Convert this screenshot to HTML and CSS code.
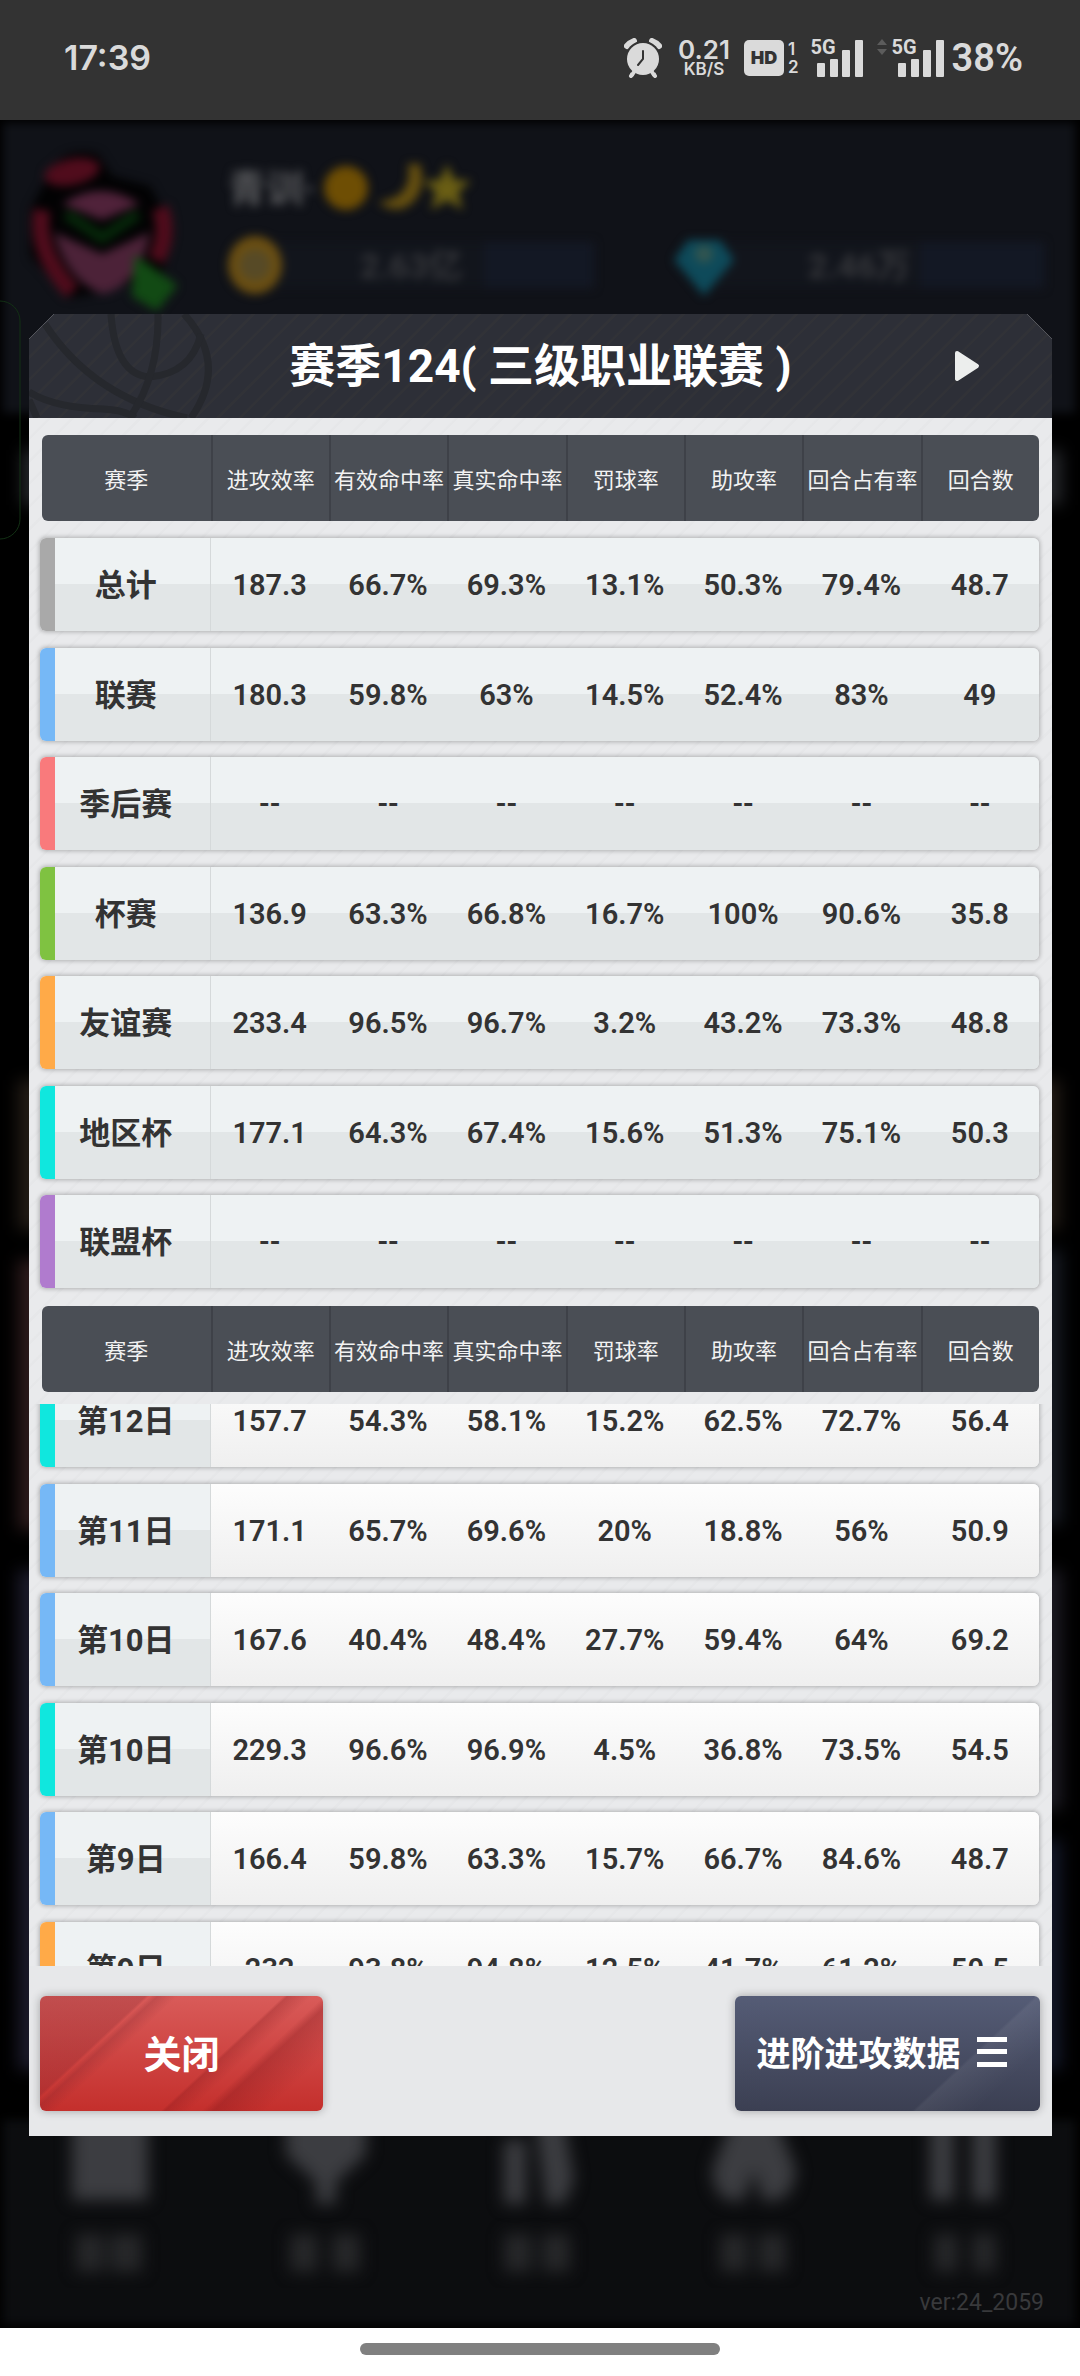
FILE: index.html
```html
<!DOCTYPE html>
<html lang="zh-CN">
  <head>
    <meta charset="UTF-8" />
    <meta name="viewport" content="width=device-width, initial-scale=1.0" />
    <title>赛季数据</title>
    <link rel="stylesheet" href="styles.css">
  </head>
  <body>
    <header class="status-bar">
      <span class="clock">17:39</span>
      <div class="status-icons">
        <svg class="alarm" width="38" height="40" viewBox="0 0 38 40">
          <path d="M3 8 A16 16 0 0 1 10 3" stroke="#dadada" stroke-width="6" fill="none" stroke-linecap="round" />
          <path d="M28 3 A16 16 0 0 1 35 8" stroke="#dadada" stroke-width="6" fill="none" stroke-linecap="round" />
          <path d="M10 33 L7 38 M28 33 L31 38" stroke="#dadada" stroke-width="4" stroke-linecap="round" />
          <circle cx="19" cy="21" r="18" fill="#333" />
          <circle cx="19" cy="21" r="16" fill="#dadada" />
          <path d="M10 34 L8 37 M28 34 L30 37" stroke="#dadada" stroke-width="4" stroke-linecap="round" />
          <path d="M19 13 V21 L14 27" stroke="#333" stroke-width="2" fill="none" stroke-linecap="round" />
        </svg>
        <div class="net-speed"><span>0.21</span><small>KB/S</small></div>
        <div class="hd"><b>HD</b><span class="sims"><i>1</i><i>2</i></span></div>
        <div class="signal">
          <svg width="46" height="37" viewBox="0 0 46 37" fill="#dadada">
            <rect x="0" y="23" width="8" height="14" rx="1" />
            <rect x="13" y="19" width="8" height="18" rx="1" />
            <rect x="25" y="10" width="8" height="27" rx="1" />
            <rect x="38" y="0" width="8" height="37" rx="1" />
          </svg>
          <span class="net-type">5G</span>
        </div>
        <svg class="arrows" width="10" height="16" viewBox="0 0 10 16" fill="#5c5c5c">
          <path d="M5 0 L10 6 H0 Z M5 16 L10 10 H0 Z" />
        </svg>
        <div class="signal">
          <svg width="46" height="37" viewBox="0 0 46 37" fill="#dadada">
            <rect x="0" y="23" width="8" height="14" rx="1" />
            <rect x="13" y="19" width="8" height="18" rx="1" />
            <rect x="25" y="10" width="8" height="27" rx="1" />
            <rect x="38" y="0" width="8" height="37" rx="1" />
          </svg>
          <span class="net-type">5G</span>
        </div>
        <span class="battery">38%</span>
      </div>
    </header>

    <main class="game">
      <!-- dimmed home screen behind the dialog -->
      <svg class="backdrop" viewBox="0 0 1080 2208" preserveAspectRatio="none" aria-hidden="true">
        <defs>
          <filter id="soft" x="-20%" y="-20%" width="140%" height="140%" color-interpolation-filters="sRGB"><feGaussianBlur stdDeviation="5" /></filter>
          <filter id="softer" x="-20%" y="-40%" width="140%" height="180%" color-interpolation-filters="sRGB"><feGaussianBlur stdDeviation="8" /></filter>
        </defs>
        <rect width="1080" height="2208" fill="#000" />
        <g filter="url(#soft)">
          <rect x="3" y="3" width="1072" height="290" fill="#101218" />
          <rect x="3" y="2000" width="1072" height="204" fill="#0c0d0f" />
        </g>
        <g filter="url(#softer)">
          <rect x="22" y="330" width="1040" height="55" fill="#24262a" />
          <rect x="18" y="960" width="1042" height="150" fill="#221b15" />
          <rect x="18" y="1140" width="500" height="270" fill="#2c1a1b" />
          <rect x="560" y="1130" width="502" height="275" fill="#161a22" />
          <rect x="18" y="1450" width="500" height="500" fill="#1b1a2a" />
          <rect x="560" y="1450" width="502" height="240" fill="#1c1a22" />
          <rect x="560" y="1720" width="502" height="230" fill="#121626" />
        </g>
        <g filter="url(#soft)">
          <path d="M46 60 Q60 24 98 34 L112 56 L150 66 L174 112 L164 150 L104 172 L70 178 L30 136 L30 90 Z" fill="#020203" />
          <ellipse cx="72" cy="52" rx="28" ry="13" transform="rotate(-12 72 52)" fill="#500c1c" />
          <path d="M62 84 Q100 58 140 84 L102 100 Z" fill="#50223a" />
          <path d="M54 112 L102 134 L150 112 Q140 166 102 174 Q66 160 54 112 Z" fill="#4c2238" />
          <path d="M66 94 L102 118 L138 94" stroke="#06280a" stroke-width="11" fill="none" />
          <path d="M42 90 Q34 130 72 172" stroke="#500c1c" stroke-width="17" fill="none" />
          <path d="M160 88 Q170 114 156 140" stroke="#500c1c" stroke-width="17" fill="none" />
          <path d="M138 142 L172 166 L156 186 L136 174 Z" fill="#124a14" stroke="#124a14" stroke-width="8" />
          <rect x="250" y="122" width="344" height="46" fill="#12151c" />
          <rect x="484" y="122" width="110" height="46" fill="#131824" />
          <rect x="700" y="122" width="344" height="46" fill="#12151c" />
          <rect x="920" y="122" width="124" height="46" fill="#131824" />
          <ellipse cx="255" cy="145" rx="27" ry="29" fill="#6b4f12" />
          <circle cx="255" cy="145" r="16" fill="#574a26" />
          <path d="M688 120 L720 120 L734 140 L704 176 L674 140 Z" fill="#0e4a5a" />
          <circle cx="704" cy="134" r="9" fill="#33554f" />
          <circle cx="346" cy="68" r="22" fill="#6e4e04" />
          <path d="M408 44 Q414 78 378 82 Q390 92 404 88 Q428 76 420 44 Z" fill="#665010" />
          <path d="M447 44 L454 60 L471 61 L458 72 L463 90 L447 80 L431 90 L436 72 L423 61 L440 60 Z" fill="#6a5e14" />
          <text x="228" y="82" font-size="38" font-weight="700" fill="#56575a">青训·</text>
          <text x="360" y="158" font-size="34" font-weight="700" fill="#36373b">2.63亿</text>
          <text x="808" y="158" font-size="34" font-weight="700" fill="#36373b">2.46万</text>
        </g>
        <g filter="url(#softer)" fill="#3c3d41">
          <rect x="72" y="1990" width="76" height="90" />
          <path d="M286 1990 H366 V2035 L336 2062 V2084 H316 V2062 L286 2035 Z" />
          <path d="M504 2020 H526 V2084 H504 Z M534 1990 H562 L574 2060 L564 2084 H546 Z" />
          <path d="M736 1990 H772 L796 2050 Q792 2086 762 2080 L754 2050 L744 2080 Q714 2086 712 2050 Z" />
          <rect x="930" y="1990" width="24" height="90" />
          <rect x="972" y="1990" width="24" height="90" />
        </g>
        <g filter="url(#softer)" fill="#262729">
          <path d="M76 2114 h28 v38 h-28 z m34 0 h32 v38 h-32 z" />
          <path d="M290 2114 h28 v38 h-28 z m42 0 h28 v38 h-28 z" />
          <path d="M504 2114 h28 v38 h-28 z m38 0 h28 v38 h-28 z" />
          <path d="M720 2114 h28 v38 h-28 z m38 0 h28 v38 h-28 z" />
          <path d="M934 2114 h24 v38 h-24 z m38 0 h24 v38 h-24 z" />
        </g>
        <path d="M0 181 A20 20 0 0 1 20 201 V399 A20 20 0 0 1 0 419" fill="none" stroke="#123014" stroke-width="1" />
      </svg>

      <section class="dialog">
        <div class="dialog-head">
          <svg class="ball" viewBox="0 0 184 104" preserveAspectRatio="xMinYMin slice" fill="none" stroke="#26282d" stroke-width="7" aria-hidden="true">
            <path d="M155 0 Q200 50 162 104" />
            <path d="M16 10 Q64 84 158 104" />
            <path d="M82 0 Q86 60 120 63 Q162 60 172 20" />
            <path d="M129 0 Q130 60 102 102" />
            <path d="M0 78 Q26 94 74 95 Q96 96 106 104" />
            <path d="M0 86 L8 104" />
          </svg>
          <h1>赛季124( 三级职业联赛 )</h1>
          <button type="button" class="next" aria-label="下一赛季">
            <svg width="26" height="32" viewBox="0 0 26 32"><path d="M3 3 L23 16 L3 29 Z" fill="#eceeed" stroke="#eceeed" stroke-width="4" stroke-linejoin="round" /></svg>
          </button>
        </div>

        <div class="dialog-body">
          <table class="stats summary">
            <thead>
              <tr><th>赛季</th><th>进攻效率</th><th>有效命中率</th><th>真实命中率</th><th>罚球率</th><th>助攻率</th><th>回合占有率</th><th>回合数</th></tr>
            </thead>
            <tbody>
              <tr class="total"><th>总计</th><td>187.3</td><td>66.7%</td><td>69.3%</td><td>13.1%</td><td>50.3%</td><td>79.4%</td><td>48.7</td></tr>
              <tr class="league"><th>联赛</th><td>180.3</td><td>59.8%</td><td>63%</td><td>14.5%</td><td>52.4%</td><td>83%</td><td>49</td></tr>
              <tr class="playoff"><th>季后赛</th><td>--</td><td>--</td><td>--</td><td>--</td><td>--</td><td>--</td><td>--</td></tr>
              <tr class="cup"><th>杯赛</th><td>136.9</td><td>63.3%</td><td>66.8%</td><td>16.7%</td><td>100%</td><td>90.6%</td><td>35.8</td></tr>
              <tr class="friendly"><th>友谊赛</th><td>233.4</td><td>96.5%</td><td>96.7%</td><td>3.2%</td><td>43.2%</td><td>73.3%</td><td>48.8</td></tr>
              <tr class="region"><th>地区杯</th><td>177.1</td><td>64.3%</td><td>67.4%</td><td>15.6%</td><td>51.3%</td><td>75.1%</td><td>50.3</td></tr>
              <tr class="alliance"><th>联盟杯</th><td>--</td><td>--</td><td>--</td><td>--</td><td>--</td><td>--</td><td>--</td></tr>
            </tbody>
          </table>

          <table class="stats daily">
            <thead>
              <tr><th>赛季</th><th>进攻效率</th><th>有效命中率</th><th>真实命中率</th><th>罚球率</th><th>助攻率</th><th>回合占有率</th><th>回合数</th></tr>
            </thead>
            <tbody>
              <tr class="region"><th>第12日</th><td>157.7</td><td>54.3%</td><td>58.1%</td><td>15.2%</td><td>62.5%</td><td>72.7%</td><td>56.4</td></tr>
              <tr class="league"><th>第11日</th><td>171.1</td><td>65.7%</td><td>69.6%</td><td>20%</td><td>18.8%</td><td>56%</td><td>50.9</td></tr>
              <tr class="league"><th>第10日</th><td>167.6</td><td>40.4%</td><td>48.4%</td><td>27.7%</td><td>59.4%</td><td>64%</td><td>69.2</td></tr>
              <tr class="region"><th>第10日</th><td>229.3</td><td>96.6%</td><td>96.9%</td><td>4.5%</td><td>36.8%</td><td>73.5%</td><td>54.5</td></tr>
              <tr class="league"><th>第9日</th><td>166.4</td><td>59.8%</td><td>63.3%</td><td>15.7%</td><td>66.7%</td><td>84.6%</td><td>48.7</td></tr>
              <tr class="friendly"><th>第9日</th><td>232</td><td>93.8%</td><td>94.8%</td><td>12.5%</td><td>41.7%</td><td>61.2%</td><td>50.5</td></tr>
            </tbody>
          </table>
        </div>

        <div class="dialog-foot">
          <button type="button" class="btn close">关闭</button>
          <button type="button" class="btn advanced">
            进阶进攻数据
            <svg width="30" height="30" viewBox="0 0 30 30" fill="#fff"><path d="M0 0h30v5H0z M0 12h30v5H0z M0 25h30v5H0z" /></svg>
          </button>
        </div>
      </section>

      <p class="version">ver:24_2059</p>
    </main>

    <footer class="nav-bar"><span class="handle"></span></footer>
  </body>
</html>
```
FILE: styles.css
```css
* {
  box-sizing: border-box;
}
body {
  margin: 0;
  min-height: 100vh;
  display: flex;
  flex-direction: column;
  font-family: Roboto, "Noto Sans CJK SC", sans-serif;
  background: #fff;
  color: #333;
}
h1,
p {
  margin: 0;
}
button {
  border: none;
  padding: 0;
  background: none;
  font-family: inherit;
  cursor: pointer;
}

/* status bar */
.status-bar {
  height: 120px;
  padding: 0 57px 4px 64px;
  display: flex;
  align-items: center;
  justify-content: space-between;
  background: #333;
  color: #dadada;
  font-family: Inter, sans-serif;
  font-weight: 600;
}
.clock {
  font-size: 34px;
  line-height: 40px;
}
.status-icons {
  display: flex;
  align-items: center;
}
.net-speed {
  display: flex;
  flex-direction: column;
  align-items: center;
  margin: 0 14px 0 16px;
  font-size: 26px;
  line-height: 22px;
}
.net-speed small {
  font-size: 17px;
  line-height: 16px;
}
.hd {
  display: flex;
  align-items: center;
  gap: 4px;
  margin-right: 12px;
}
.hd b {
  width: 40px;
  line-height: 36px;
  border-radius: 5px;
  background: #dadada;
  color: #333;
  font-size: 18px;
  text-align: center;
}
.sims {
  display: flex;
  flex-direction: column;
  font-size: 17px;
  line-height: 18px;
}
.sims i {
  font-style: normal;
}
.signal {
  position: relative;
  display: flex;
  padding-left: 6px;
}
.net-type {
  position: absolute;
  top: 0;
  left: 0;
  font-family: Roboto, sans-serif;
  font-size: 20px;
  font-weight: 700;
  line-height: 15px;
}
.arrows {
  margin: 0 5px 22px 14px;
}
.battery {
  margin-left: 8px;
  font-family: Roboto, sans-serif;
  font-size: 38px;
  line-height: 40px;
}

/* game area */
.game {
  position: relative;
  flex: 1;
  padding: 194px 28px 0 29px;
  background: #000;
}
.backdrop {
  position: absolute;
  inset: 0;
  width: 100%;
  height: 100%;
}
.dialog {
  position: relative;
  background: #e7e8ea;
  clip-path: polygon(25px 0, calc(100% - 25px) 0, 100% 25px, 100% 100%, 0 100%, 0 25px);
}
.dialog-head {
  position: relative;
  height: 104px;
  display: flex;
  align-items: center;
  justify-content: center;
  background: repeating-linear-gradient(135deg, #2d2f37 0 13px, #313237 14px 16px);
}
.ball {
  position: absolute;
  left: 0;
  top: 0;
  width: 184px;
  height: 100%;
}
.dialog-head h1 {
  position: relative;
  color: #fff;
  font-size: 46px;
  line-height: 60px;
}
.next {
  position: absolute;
  right: 72px;
  display: flex;
}
.dialog-body {
  padding: 17px 13px 0;
  background: repeating-linear-gradient(135deg, #e9eaec 0 13px, #e6e7e9 14px 16px);
}

/* stats tables */
.stats,
.stats thead,
.stats tbody {
  display: block;
}
.stats tr {
  display: grid;
  grid-template-columns: 168fr repeat(7, 118fr);
}
.stats th,
.stats td {
  display: flex;
  align-items: center;
  justify-content: center;
  padding: 0;
  white-space: nowrap;
}
.stats thead tr {
  height: 86px;
  border-radius: 6px;
  background: #4a4e55;
}
.stats thead th {
  color: #f2f2f2;
  font-size: 22px;
  font-weight: 400;
}
.stats thead th + th {
  border-left: 2px solid #3e4148;
}
.stats tbody {
  margin-left: -2px;
}
.stats tbody tr {
  grid-template-columns: 170fr repeat(7, 118fr);
  height: 93px;
  margin-bottom: 17px;
  border-radius: 6px;
  overflow: hidden;
  background: linear-gradient(#eef2f3 50%, #e2e6e7 50%);
  box-shadow: 0 0 4px 1px rgba(0, 0, 0, 0.25);
}
.stats tbody tr:nth-child(even) {
  margin-bottom: 16px;
}
.stats tbody th {
  padding: 0 0 4px 2px;
  background: linear-gradient(to right, var(--tag) 15px, transparent 15px);
  border-right: 1px solid #d5d9da;
  font-size: 31px;
  font-weight: 700;
}
.stats tbody td {
  font-size: 29px;
  font-weight: 600;
}
.summary tbody {
  padding: 17px 0 1px;
}

/* scrolling list, padded sideways so the row shadows are not clipped */
.daily tbody {
  height: 562px;
  margin: 12px -8px 0 -10px;
  padding: 0 8px;
  overflow: hidden;
}
.daily tbody tr:first-child {
  margin-top: -30px;
}
.daily tbody td {
  background: linear-gradient(#fdfdfd, #efefef);
}

.total {
  --tag: #a9a9a9;
}
.league {
  --tag: #76b8f6;
}
.playoff {
  --tag: #f97a7c;
}
.cup {
  --tag: #7fc241;
}
.friendly {
  --tag: #ffaa48;
}
.region {
  --tag: #10e7de;
}
.alliance {
  --tag: #b07bce;
}

/* buttons */
.dialog-foot {
  display: flex;
  align-items: center;
  justify-content: space-between;
  padding: 30px 12px 25px 11px;
}
.btn {
  height: 115px;
  padding-bottom: 4px;
  border-radius: 6px;
  color: #fff;
  font-weight: 700;
  box-shadow: 0 0 10px rgba(0, 0, 0, 0.3);
}
.close {
  width: 283px;
  font-size: 38px;
  background:
    linear-gradient(137deg, transparent 60%, rgba(120, 20, 25, 0.25) 61%, transparent 67%, transparent 70%, rgba(120, 20, 25, 0.3) 73%, transparent 86%),
    linear-gradient(137deg, rgba(110, 30, 40, 0.22) 26%, transparent 27%, rgba(110, 30, 40, 0.22) 29%, transparent 34%),
    linear-gradient(#d95b59, #c42f2c);
}
.advanced {
  width: 305px;
  display: flex;
  align-items: center;
  justify-content: center;
  gap: 16px;
  padding-right: 12px;
  font-size: 34px;
  background:
    linear-gradient(137deg, transparent 70%, rgba(255, 255, 255, 0.06) 71%, transparent 85%),
    linear-gradient(#555c76, #3b3f52);
}

.version {
  position: absolute;
  right: 36px;
  bottom: 10px;
  color: #38393b;
  font-size: 23px;
  line-height: 30px;
}

/* gesture bar */
.nav-bar {
  height: 48px;
  padding-top: 15px;
  display: flex;
  justify-content: center;
  background: #fff;
}
.handle {
  width: calc(100% / 3);
  height: 12px;
  border-radius: 6px;
  background: #808080;
}
```
